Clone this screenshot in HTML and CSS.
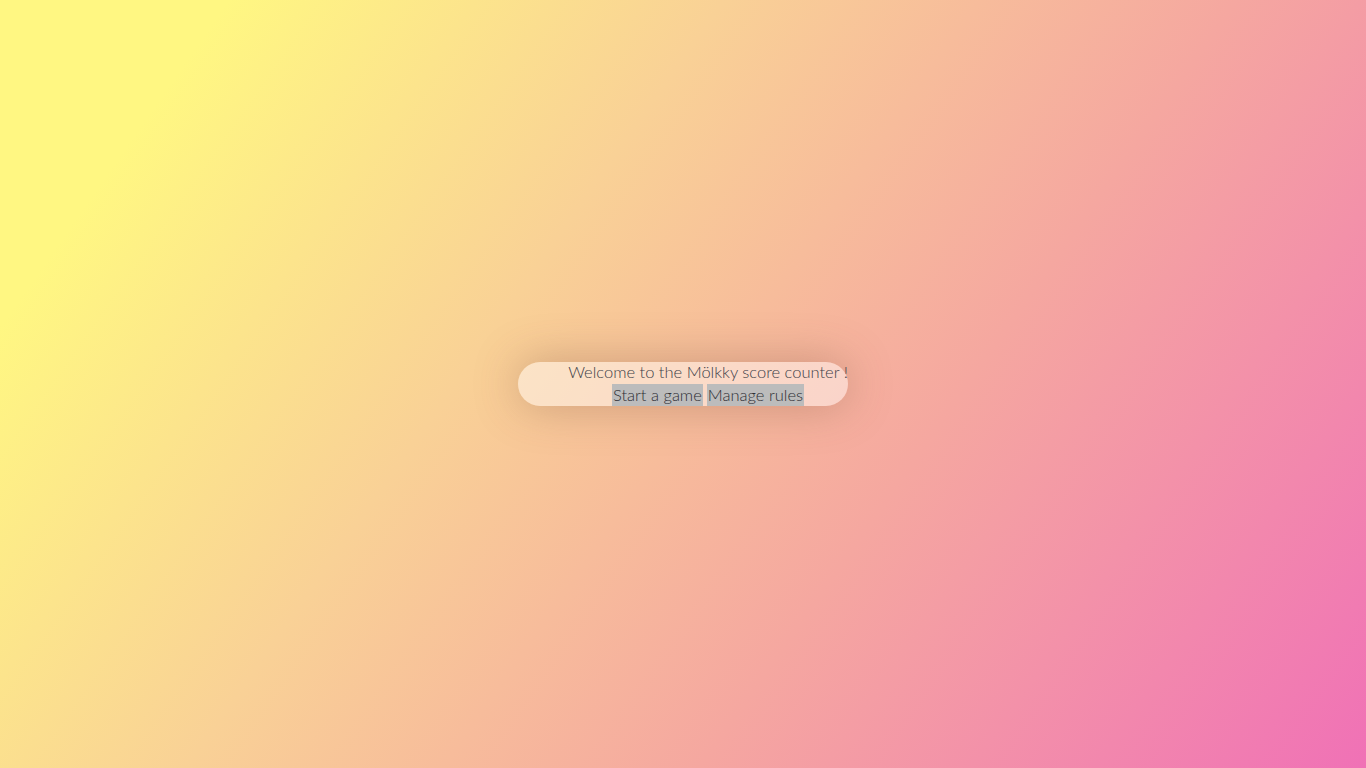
FILE: index.html
```html
<!DOCTYPE html>
<html>
<head>
<meta charset="utf-8">
<link rel="stylesheet" href="styles.css">
</head>
<body>
<main class="page">
  <section class="card">
    <p class="welcome">Welcome to the Mölkky score counter !</p>
    <div class="actions">
      <button class="btn">Start a game</button>
      <button class="btn">Manage rules</button>
    </div>
  </section>
</main>
</body>
</html>
```
FILE: styles.css
```css
html, body {
  margin: 0;
  height: 100%;
}
body {
  background: linear-gradient(125deg, #fff782 12%, #f9d196 38%, #f5a7a0 65%, #f071b6 100%);
  font-family: Lato, "Open Sans", sans-serif;
  font-weight: 300;
  color: #404048;
}
.page {
  height: 100%;
  display: flex;
  align-items: center;
  justify-content: center;
}
.card {
  box-sizing: border-box;
  width: 330px;
  height: 44px;
  padding-left: 50px;
  border-radius: 22px;
  background: rgba(255, 255, 255, 0.45);
  box-shadow: 0 0 45px rgba(120, 80, 60, 0.35);
  text-align: center;
  display: flex;
  flex-direction: column;
  align-items: center;
}
.welcome {
  margin: 0 0 2px;
  font-size: 16.5px;
  line-height: 20px;
  white-space: nowrap;
}
.actions {
  display: flex;
  gap: 4px;
}
.btn {
  font: inherit;
  font-size: 16.5px;
  line-height: 22px;
  color: #2e2e34;
  background: #bcbcbc;
  border: none;
  padding: 0 1px;
  margin: 0;
  height: 22px;
}
```
